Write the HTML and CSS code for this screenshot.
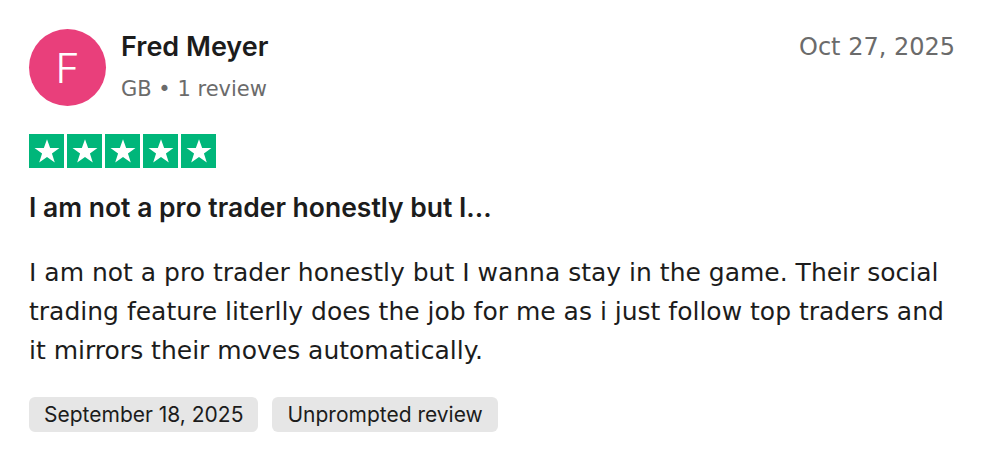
FILE: index.html
```html
<!DOCTYPE html>
<html lang="en">
<head>
<meta charset="utf-8">
<title>Review</title>
<link rel="stylesheet" href="styles.css">
</head>
<body>
<article class="review">
  <header class="head">
    <div class="avatar">F</div>
    <div class="who">
      <div class="name">Fred Meyer</div>
      <div class="meta">GB • 1 review</div>
    </div>
    <time class="date">Oct 27, 2025</time>
  </header>
  <div class="stars">
    <span class="star"><svg viewBox="0 0 24 24"><path d="M12 3.2l2.35 6.6h7l-5.65 4.1 2.15 6.7L12 16.5l-5.85 4.1 2.15-6.7L2.65 9.8h7z"/></svg></span>
    <span class="star"><svg viewBox="0 0 24 24"><path d="M12 3.2l2.35 6.6h7l-5.65 4.1 2.15 6.7L12 16.5l-5.85 4.1 2.15-6.7L2.65 9.8h7z"/></svg></span>
    <span class="star"><svg viewBox="0 0 24 24"><path d="M12 3.2l2.35 6.6h7l-5.65 4.1 2.15 6.7L12 16.5l-5.85 4.1 2.15-6.7L2.65 9.8h7z"/></svg></span>
    <span class="star"><svg viewBox="0 0 24 24"><path d="M12 3.2l2.35 6.6h7l-5.65 4.1 2.15 6.7L12 16.5l-5.85 4.1 2.15-6.7L2.65 9.8h7z"/></svg></span>
    <span class="star"><svg viewBox="0 0 24 24"><path d="M12 3.2l2.35 6.6h7l-5.65 4.1 2.15 6.7L12 16.5l-5.85 4.1 2.15-6.7L2.65 9.8h7z"/></svg></span>
  </div>
  <h2 class="title">I am not a pro trader honestly but I...</h2>
  <p class="body">I am not a pro trader honestly but I wanna stay in the game. Their social trading feature literlly does the job for me as i just follow top traders and it mirrors their moves automatically.</p>
  <div class="tags">
    <span class="tag">September 18, 2025</span>
    <span class="tag">Unprompted review</span>
  </div>
</article>
</body>
</html>
```
FILE: styles.css
```css
* { box-sizing: border-box; }
html, body { margin: 0; padding: 0; background: #ffffff; }
body {
  font-family: "DejaVu Sans", sans-serif;
  color: #1c1c1c;
}
.review {
  width: 992px;
  padding: 29px 37px 0 29px;
}
.head {
  display: flex;
  align-items: flex-start;
}
.avatar {
  width: 77px;
  height: 77px;
  border-radius: 50%;
  background: #e93f7b;
  color: #fff;
  display: flex;
  align-items: center;
  justify-content: center;
  font-family: Inter, sans-serif;
  font-size: 41px;
  font-weight: 300;
  flex: none;
}
.who {
  margin-left: 15px;
  flex: 1;
  padding-top: 2px;
}
.name {
  font-family: Inter, sans-serif;
  font-size: 27px;
  font-weight: 600;
  line-height: 32px;
}
.meta {
  margin-top: 13px;
  font-size: 21px;
  color: #6b6b6b;
  line-height: 26px;
}
.date {
  font-size: 24px;
  color: #6b6b6b;
  line-height: 32px;
  padding-top: 2px;
}
.stars {
  display: flex;
  gap: 3px;
  margin-top: 28px;
}
.star {
  width: 35px;
  height: 34px;
  background: #00b67a;
  display: flex;
  align-items: center;
  justify-content: center;
}
.star svg {
  width: 32px;
  height: 32px;
  fill: #fff;
}
.title {
  margin: 23px 0 0;
  font-family: Inter, sans-serif;
  font-size: 26.5px;
  font-weight: 600;
  line-height: 32px;
}
.body {
  margin: 30px 0 0;
  font-size: 25px;
  line-height: 39px;
}
.tags {
  display: flex;
  gap: 14px;
  margin-top: 27px;
}
.tag {
  background: #e6e6e6;
  border-radius: 6px;
  height: 35px;
  padding: 0 15px;
  display: flex;
  align-items: center;
  font-family: Inter, sans-serif;
  font-size: 21px;
}
```
